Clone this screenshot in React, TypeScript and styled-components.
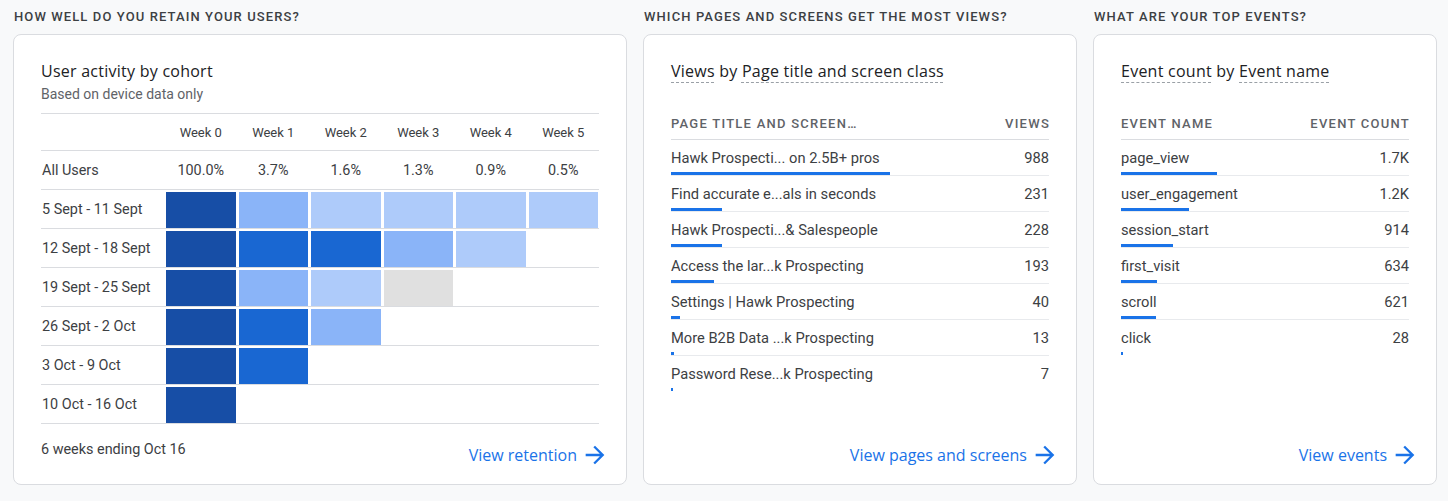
import React from "react"
import styled, { createGlobalStyle } from "styled-components"

const GlobalStyle = createGlobalStyle`
    body {
        margin: 0;
        background: #f8f9fa;
        font-family: Roboto, "Liberation Sans", sans-serif;
        color: #3c4043;
    }
`

const Page = styled.div`
    display: grid;
    grid-template-columns: 614px 434px 344px;
    column-gap: 16px;
    padding: 0 0 0 13px;
    width: 1448px;
    height: 501px;
    box-sizing: border-box;
`

const Section = styled.section`
    display: flex;
    flex-direction: column;
`

const SectionHeading = styled.h2`
    margin: 0;
    height: 34px;
    line-height: 34px;
    padding-left: 1px;
    font-family: Roboto, "Liberation Sans", sans-serif;
    font-size: 13px;
    font-weight: 500;
    letter-spacing: 1.1px;
    color: #3c4043;
    text-transform: uppercase;
    white-space: nowrap;
`

const Card = styled.div`
    height: 451px;
    box-sizing: border-box;
    background: #fff;
    border: 1px solid #dadce0;
    border-radius: 8px;
    padding: 24px 27px 0 27px;
    display: flex;
    flex-direction: column;
`

const CardTitle = styled.div`
    font-family: "Open Sans", Roboto, sans-serif;
    font-size: 16px;
    font-weight: 500;
    letter-spacing: 0.25px;
    line-height: 24px;
    color: #202124;
`

const Dashed = styled.span`
    text-decoration: underline dashed #9aa0a6;
    text-underline-offset: 5px;
    text-decoration-thickness: 1px;
`

const Subtitle = styled.div`
    font-size: 14px;
    line-height: 20px;
    color: #5f6368;
    margin-top: 1px;
`

/* cohort table */

const Cohort = styled.div`
    margin-top: 9px;
    border-top: 1px solid #dadce0;
`

const CohortRow = styled.div<{ $head?: boolean }>`
    display: grid;
    grid-template-columns: 122px repeat(6, 69.5px);
    column-gap: 3px;
    align-items: center;
    height: ${p => (p.$head ? 36 : 38)}px;
    border-bottom: 1px solid #dadce0;
    font-size: ${p => (p.$head ? 13 : 14.4)}px;
    color: #3c4043;
`

const RowLabel = styled.div`
    padding-left: 1px;
    white-space: nowrap;
`

const Pct = styled.div`
    text-align: center;
`

const Cell = styled.div<{ $c: string }>`
    height: 36px;
    margin-top: 2px;
    align-self: start;
    background: ${p => p.$c};
`

const CardFoot = styled.div`
    margin-top: auto;
    margin-right: -10px;
    display: flex;
    justify-content: flex-end;
    align-items: flex-end;
    height: 62px;
    box-sizing: border-box;
    padding-bottom: 17px;
`

const Caption = styled.div`
    margin-right: auto;
    align-self: flex-start;
    padding-top: 16px;
    font-size: 14.4px;
    line-height: 20px;
    color: #3c4043;
`

const ViewLink = styled.a`
    display: flex;
    align-items: center;
    gap: 4px;
    color: #1a73e8;
    text-decoration: none;
    font-family: "Open Sans", Roboto, sans-serif;
    font-size: 16px;
    font-weight: 500;
    line-height: 24px;
    svg {
        width: 28px;
        height: 28px;
        margin: -2px 0;
    }
`

/* top-N tables */

const ListTable = styled.div`
    margin-top: 29px;
`

const ListHead = styled.div`
    display: flex;
    justify-content: space-between;
    height: 28px;
    border-bottom: 1px solid #dadce0;
    font-family: Roboto, "Liberation Sans", sans-serif;
    font-size: 13px;
    font-weight: 500;
    letter-spacing: 1.25px;
    line-height: 20px;
    padding-top: 2px;
    box-sizing: border-box;
    color: #5f6368;
    text-transform: uppercase;
    span:last-child {
        margin-right: -1px;
    }
`

const ListRow = styled.div<{ $last?: boolean }>`
    height: 36px;
    box-sizing: border-box;
    padding-top: 9px;
    border-bottom: 1px solid ${p => (p.$last ? "transparent" : "#e8eaed")};
`

const RowLine = styled.div`
    display: flex;
    justify-content: space-between;
    font-size: 14.7px;
    line-height: 18px;
    color: #3c4043;
    white-space: nowrap;
`

const Bar = styled.div`
    margin-top: 5px;
    height: 3px;
    background: #1a73e8;
`

const Arrow = () => (
    <svg viewBox="0 0 24 24" fill="#1a73e8">
        <path d="M12 4l-1.41 1.41L16.17 11H4v2h12.17l-5.58 5.59L12 20l8-8z" />
    </svg>
)

const D = "#174ea6"
const M = "#1967d2"
const L = "#8ab4f8"
const XL = "#aecbfa"
const G = "#e0e0e0"

const cohorts: [string, string[]][] = [
    ["5 Sept - 11 Sept", [D, L, XL, XL, XL, XL]],
    ["12 Sept - 18 Sept", [D, M, M, L, XL]],
    ["19 Sept - 25 Sept", [D, L, XL, G]],
    ["26 Sept - 2 Oct", [D, M, L]],
    ["3 Oct - 9 Oct", [D, M]],
    ["10 Oct - 16 Oct", [D]],
]

const pages: [string, string, number][] = [
    ["Hawk Prospecti... on 2.5B+ pros", "988", 988],
    ["Find accurate e...als in seconds", "231", 231],
    ["Hawk Prospecti...& Salespeople", "228", 228],
    ["Access the lar...k Prospecting", "193", 193],
    ["Settings | Hawk Prospecting", "40", 40],
    ["More B2B Data ...k Prospecting", "13", 13],
    ["Password Rese...k Prospecting", "7", 7],
]

const events: [string, string, number][] = [
    ["page_view", "1.7K", 1700],
    ["user_engagement", "1.2K", 1200],
    ["session_start", "914", 914],
    ["first_visit", "634", 634],
    ["scroll", "621", 621],
    ["click", "28", 28],
]

const TopList: React.FC<{
    cols: [string, string]
    rows: [string, string, number][]
    maxBar: number
}> = ({ cols, rows, maxBar }) => {
    const max = rows[0][2]
    return (
        <ListTable>
            <ListHead>
                <span>{cols[0]}</span>
                <span>{cols[1]}</span>
            </ListHead>
            {rows.map(([name, shown, v], i) => (
                <ListRow key={name} $last={i === rows.length - 1}>
                    <RowLine>
                        <span>{name}</span>
                        <span>{shown}</span>
                    </RowLine>
                    <Bar style={{ width: Math.max(1, Math.round((v / max) * maxBar)) }} />
                </ListRow>
            ))}
        </ListTable>
    )
}

const App: React.FC = () => {
    return (
        <>
            <GlobalStyle />
            <Page>
                <Section>
                    <SectionHeading>How well do you retain your users?</SectionHeading>
                    <Card>
                        <CardTitle>User activity by cohort</CardTitle>
                        <Subtitle>Based on device data only</Subtitle>
                        <Cohort>
                            <CohortRow $head>
                                <span />
                                {[0, 1, 2, 3, 4, 5].map(w => (
                                    <Pct key={w}>Week {w}</Pct>
                                ))}
                            </CohortRow>
                            <CohortRow>
                                <RowLabel>All Users</RowLabel>
                                {["100.0%", "3.7%", "1.6%", "1.3%", "0.9%", "0.5%"].map(p => (
                                    <Pct key={p}>{p}</Pct>
                                ))}
                            </CohortRow>
                            {cohorts.map(([label, cells]) => (
                                <CohortRow key={label}>
                                    <RowLabel>{label}</RowLabel>
                                    {cells.map((c, i) => (
                                        <Cell key={i} $c={c} />
                                    ))}
                                </CohortRow>
                            ))}
                        </Cohort>
                        <CardFoot>
                            <Caption>6 weeks ending Oct 16</Caption>
                            <ViewLink href="#">
                                View retention <Arrow />
                            </ViewLink>
                        </CardFoot>
                    </Card>
                </Section>

                <Section>
                    <SectionHeading>Which pages and screens get the most views?</SectionHeading>
                    <Card>
                        <CardTitle>
                            <Dashed>Views</Dashed> by <Dashed>Page title and screen class</Dashed>
                        </CardTitle>
                        <TopList cols={["Page title and screen…", "Views"]} rows={pages} maxBar={219} />
                        <CardFoot>
                            <ViewLink href="#">
                                View pages and screens <Arrow />
                            </ViewLink>
                        </CardFoot>
                    </Card>
                </Section>

                <Section>
                    <SectionHeading>What are your top events?</SectionHeading>
                    <Card>
                        <CardTitle>
                            <Dashed>Event count</Dashed> by <Dashed>Event name</Dashed>
                        </CardTitle>
                        <TopList cols={["Event name", "Event count"]} rows={events} maxBar={96} />
                        <CardFoot>
                            <ViewLink href="#">
                                View events <Arrow />
                            </ViewLink>
                        </CardFoot>
                    </Card>
                </Section>
            </Page>
        </>
    )
}

export default App
